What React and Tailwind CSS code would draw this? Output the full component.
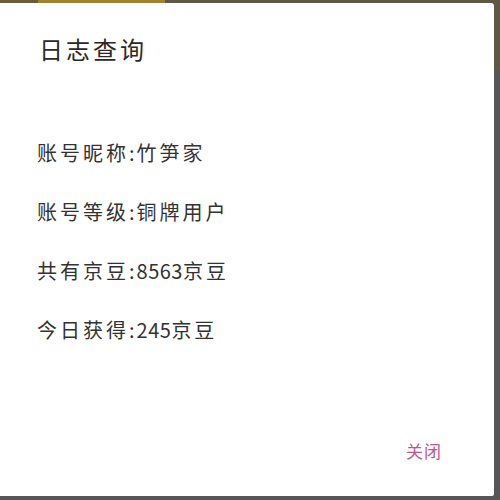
import React from "react";

const rows = [
    ["账号昵称", "竹笋家"],
    ["账号等级", "铜牌用户"],
    ["共有京豆", "8563", "京豆"],
    ["今日获得", "245", "京豆"],
];

export default function App() {
    return (
        <div className="w-[500px] h-[500px] overflow-hidden bg-[linear-gradient(to_bottom,#5f5844_70px,#565656_70px)] flex flex-col">
            {/* page peeking out behind the dialog */}
            <div className="h-[3px] flex">
                <div className="w-[38px] bg-[#6a5e3c]" />
                <div className="w-[127px] bg-[#a3822e]" />
            </div>
            <div className="flex-1 mr-[6px] mb-[4px] bg-white rounded-tr-[3px] rounded-br-[2px] flex flex-col font-['Noto_Sans_CJK_SC',serif] text-[#2a2a2a]">
                <h1 className="pl-[39px] pt-[30px] text-[24px] leading-[32px] tracking-[3px] font-normal">日志查询</h1>
                <div className="pl-[37px] pt-[75px] flex flex-col gap-[33px]">
                    {rows.map(([label, a, b]) => (
                        <p key={label} className="text-[20px] leading-[26px] tracking-[3px] text-[#333]">
                            {label}
                            <span className="tracking-[2px]">:</span>
                            {b ? (
                                <>
                                    <span className="tracking-[0.5px]">{a}</span>
                                    {b}
                                </>
                            ) : (
                                a
                            )}
                        </p>
                    ))}
                </div>
                <div className="mt-auto pb-[34px] pr-[52px] flex justify-end">
                    <button className="text-[17px] leading-[22px] tracking-[1px] text-[#c1578f]">关闭</button>
                </div>
            </div>
        </div>
    );
}
